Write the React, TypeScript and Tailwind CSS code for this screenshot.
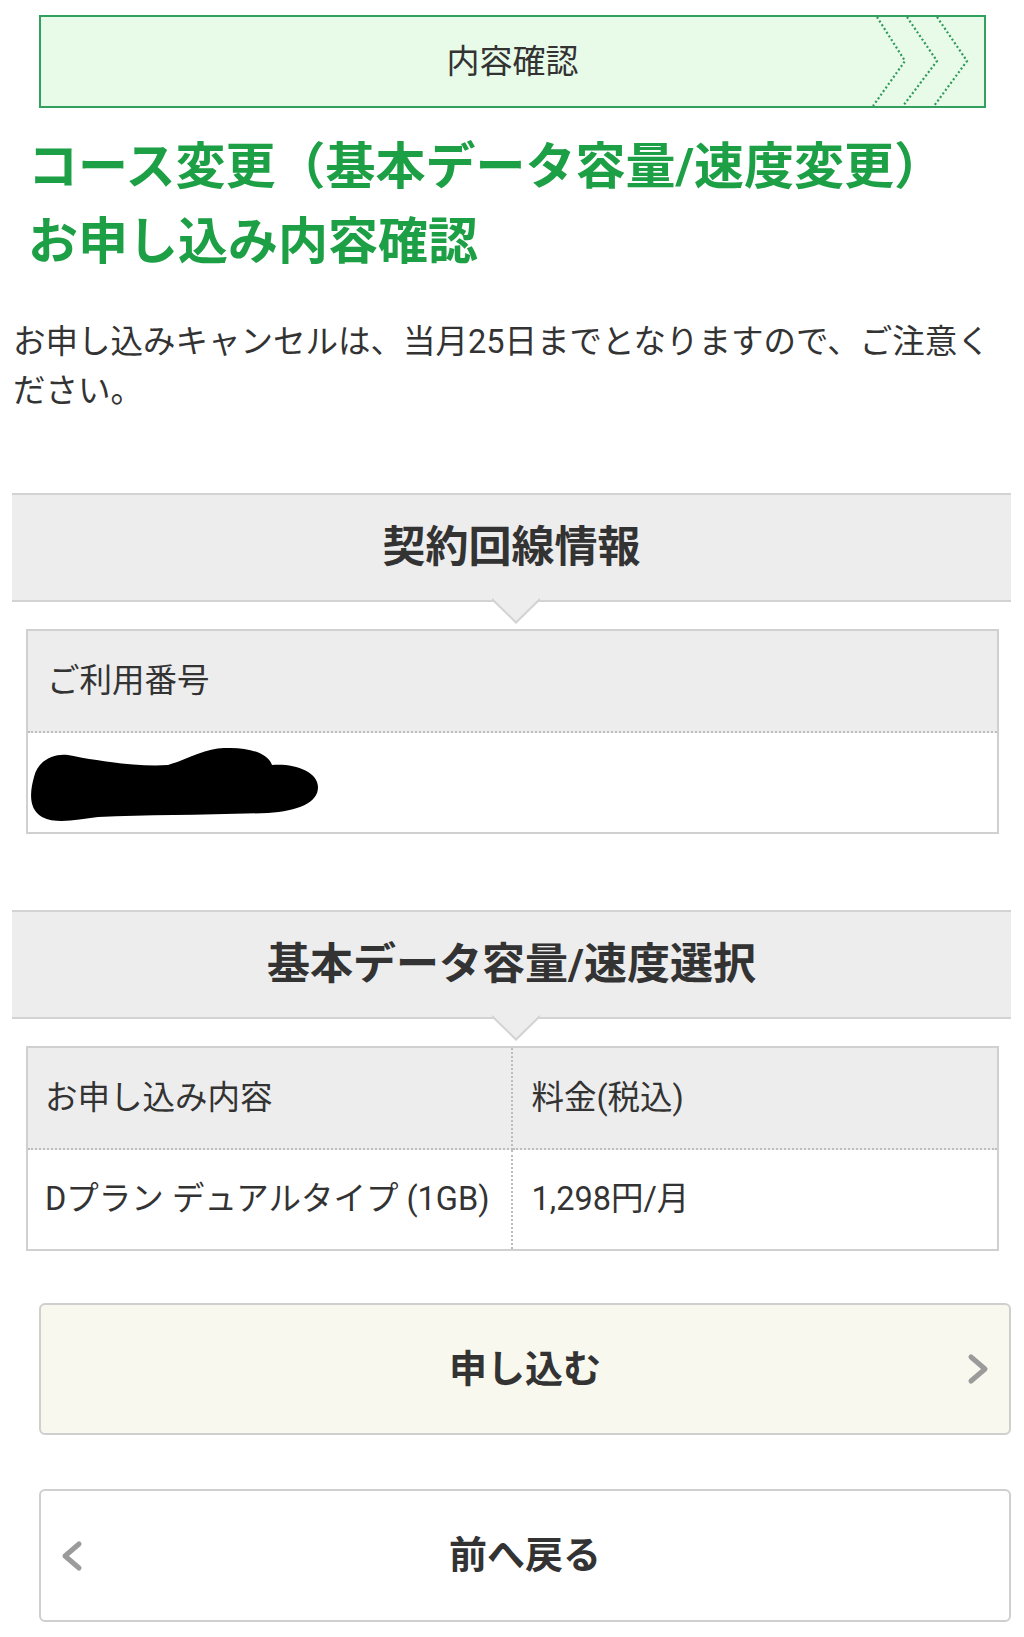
import React from 'react';

function StepChevrons() {
  return (
    <svg
      className="absolute right-0 top-0 h-full w-[120px]"
      viewBox="0 0 120 89"
      preserveAspectRatio="none"
      fill="none"
      stroke="#2f9a58"
      strokeWidth="2.2"
      strokeDasharray="2 2.4"
    >
      <polyline points="13,0 41,44 9,89" />
      <polyline points="43,0 73,44 39,89" />
      <polyline points="73,0 103,44 70,89" />
    </svg>
  );
}

function SectionBand({ title }: { title: string }) {
  return (
    <div className="relative ml-[12px] mr-[13px] flex h-[109px] items-center justify-center border-y-2 border-[#d3d3d3] bg-[#ededed]">
      <h2 className="text-[43px] font-bold leading-none text-[#333]">{title}</h2>
      <svg className="absolute left-[480px] top-[calc(100%-2px)] h-[26px] w-[48px]" viewBox="0 0 48 26">
        <polygon points="0,0 48,0 24,24" fill="#ededed" />
        <polyline points="0,1 24,24.5 48,1" fill="none" stroke="#d3d3d3" strokeWidth="2" />
      </svg>
    </div>
  );
}

function Redacted() {
  return (
    <svg className="mt-[5px] h-[76px] w-[292px]" viewBox="0 0 292 76">
      <path
        d="M6,30 C10,12 28,6 40,8 C70,14 110,20 140,18 C160,12 180,0 198,1 C220,0 240,6 244,18 C265,16 290,24 290,40 C290,56 270,64 240,66 C180,68 120,68 70,70 C50,72 30,78 14,70 C0,62 2,44 6,30 Z"
        fill="#000"
      />
    </svg>
  );
}

function ChevronIcon({ dir }: { dir: 'left' | 'right' }) {
  return (
    <svg className="h-[32px] w-[22px]" viewBox="0 0 22 32" fill="none" stroke="#9b9b9b" strokeWidth="5" strokeLinecap="round" strokeLinejoin="round">
      {dir === 'right' ? <polyline points="4,4 18,16 4,28" /> : <polyline points="18,4 4,16 18,28" />}
    </svg>
  );
}

export default function App() {
  return (
    <div className="min-h-screen bg-white pb-[17px] font-['Roboto','Noto_Sans_CJK_JP',sans-serif] text-[#333]">
      {/* step indicator */}
      <div className="relative ml-[39px] mr-[38px] mt-[15px] flex h-[93px] items-center justify-center border-2 border-[#32a05e] bg-[#e8fbe9]">
        <span className="text-[33px] leading-none text-[#333]">内容確認</span>
        <StepChevrons />
      </div>

      <h1 className="mt-[22px] pl-[28px] pr-[10px] text-[50px] font-bold leading-[75px] text-[#1d9f45]">
        コース変更（基本データ容量/速度変更）
        <br />
        お申し込み内容確認
      </h1>

      <p className="mt-[38px] w-[1010px] pl-[13px] text-[32.5px] leading-[49px]">
        お申し込みキャンセルは、当月25日までとなりますので、ご注意ください。
      </p>

      <div className="mt-[77px]">
        <SectionBand title="契約回線情報" />
        <div className="ml-[26px] mr-[25px] mt-[27px] border-2 border-[#d0d0d0]">
          <div className="flex h-[102px] items-center border-b-2 border-dotted border-[#bdbdbd] bg-[#ededed] px-[19px] text-[32.5px]">
            ご利用番号
          </div>
          <div className="flex h-[99px] items-center">
            <Redacted />
          </div>
        </div>
      </div>

      <div className="mt-[76px]">
        <SectionBand title="基本データ容量/速度選択" />
        <div className="ml-[26px] mr-[25px] mt-[27px] grid grid-cols-2 border-2 border-[#d0d0d0] text-[32.5px]">
          <div className="flex h-[102px] items-center border-b-2 border-r-2 border-dotted border-[#bdbdbd] bg-[#ededed] pl-[17px]">
            お申し込み内容
          </div>
          <div className="flex h-[102px] items-center border-b-2 border-dotted border-[#bdbdbd] bg-[#ededed] pl-[19px]">
            料金(税込)
          </div>
          <div className="flex h-[99px] items-center whitespace-nowrap border-r-2 border-dotted border-[#bdbdbd] pl-[17px]">
            Dプラン デュアルタイプ (1GB)
          </div>
          <div className="flex h-[99px] items-center pl-[19px]">1,298円/月</div>
        </div>
      </div>

      <button className="relative ml-[39px] mt-[52px] flex h-[132px] w-[972px] items-center justify-center rounded-[6px] border-2 border-[#cfcfcf] bg-[#f8f8ee]">
        <span className="text-[38px] font-bold text-[#333]">申し込む</span>
        <span className="absolute right-[20px] top-1/2 -translate-y-1/2">
          <ChevronIcon dir="right" />
        </span>
      </button>

      <button className="relative ml-[39px] mt-[54px] flex h-[133px] w-[972px] items-center justify-center rounded-[6px] border-2 border-[#cfcfcf] bg-white">
        <span className="absolute left-[20px] top-1/2 -translate-y-1/2">
          <ChevronIcon dir="left" />
        </span>
        <span className="text-[38px] font-bold text-[#333]">前へ戻る</span>
      </button>
    </div>
  );
}
